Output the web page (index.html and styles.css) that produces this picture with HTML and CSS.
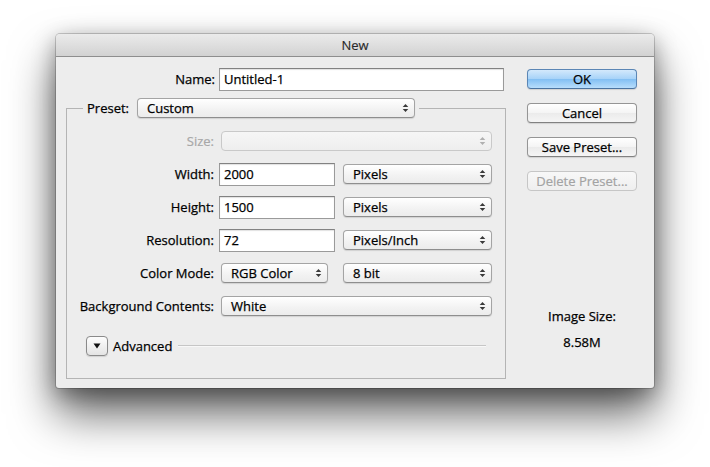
FILE: index.html
```html
<!DOCTYPE html>
<html>
<head>
<meta charset="utf-8">
<link rel="stylesheet" href="styles.css">
</head>
<body>
<div class="stage">
  <div class="dialog">
    <div class="titlebar">New</div>
    <div class="body">
      <div class="main">
        <div class="name-row">
          <span class="lbl name-lbl">Name:</span>
          <div class="textfield name-field">Untitled-1</div>
        </div>
        <fieldset class="preset">
          <legend class="legend">
            <span class="lbl">Preset:</span>
            <div class="popup preset-popup"><span class="pv">Custom</span><svg class="arr" width="7" height="10" viewBox="0 0 7 10"><path d="M0.7 4 L3.5 1 L6.3 4Z M0.7 6 L3.5 9 L6.3 6Z"/></svg></div>
          </legend>
          <div class="row first">
            <span class="lbl col-lbl dis">Size:</span>
            <div class="popup wide disabled"><span class="pv"></span><svg class="arr" width="7" height="10" viewBox="0 0 7 10"><path d="M0.7 4 L3.5 1 L6.3 4Z M0.7 6 L3.5 9 L6.3 6Z"/></svg></div>
          </div>
          <div class="row">
            <span class="lbl col-lbl">Width:</span>
            <div class="textfield num">2000</div>
            <div class="popup unit"><span class="pv">Pixels</span><svg class="arr" width="7" height="10" viewBox="0 0 7 10"><path d="M0.7 4 L3.5 1 L6.3 4Z M0.7 6 L3.5 9 L6.3 6Z"/></svg></div>
          </div>
          <div class="row">
            <span class="lbl col-lbl">Height:</span>
            <div class="textfield num">1500</div>
            <div class="popup unit"><span class="pv">Pixels</span><svg class="arr" width="7" height="10" viewBox="0 0 7 10"><path d="M0.7 4 L3.5 1 L6.3 4Z M0.7 6 L3.5 9 L6.3 6Z"/></svg></div>
          </div>
          <div class="row">
            <span class="lbl col-lbl">Resolution:</span>
            <div class="textfield num">72</div>
            <div class="popup unit"><span class="pv">Pixels/Inch</span><svg class="arr" width="7" height="10" viewBox="0 0 7 10"><path d="M0.7 4 L3.5 1 L6.3 4Z M0.7 6 L3.5 9 L6.3 6Z"/></svg></div>
          </div>
          <div class="row">
            <span class="lbl col-lbl">Color Mode:</span>
            <div class="popup mode"><span class="pv">RGB Color</span><svg class="arr" width="7" height="10" viewBox="0 0 7 10"><path d="M0.7 4 L3.5 1 L6.3 4Z M0.7 6 L3.5 9 L6.3 6Z"/></svg></div>
            <div class="popup unit"><span class="pv">8 bit</span><svg class="arr" width="7" height="10" viewBox="0 0 7 10"><path d="M0.7 4 L3.5 1 L6.3 4Z M0.7 6 L3.5 9 L6.3 6Z"/></svg></div>
          </div>
          <div class="row">
            <span class="lbl col-lbl">Background Contents:</span>
            <div class="popup wide"><span class="pv">White</span><svg class="arr" width="7" height="10" viewBox="0 0 7 10"><path d="M0.7 4 L3.5 1 L6.3 4Z M0.7 6 L3.5 9 L6.3 6Z"/></svg></div>
          </div>
          <div class="advanced">
            <div class="disclosure"><svg width="8" height="6" viewBox="0 0 8 6"><path d="M0.5 0.5 L7.5 0.5 L4 5.5Z"/></svg></div>
            <span class="adv-lbl">Advanced</span>
            <div class="adv-line"></div>
          </div>
        </fieldset>
      </div>
      <div class="side">
        <div class="btn default">OK</div>
        <div class="btn">Cancel</div>
        <div class="btn">Save Preset...</div>
        <div class="btn disabled">Delete Preset...</div>
        <div class="imgsize">
          <div class="is-lbl">Image Size:</div>
          <div class="is-val">8.58M</div>
        </div>
      </div>
    </div>
  </div>
</div>
</body>
</html>
```
FILE: styles.css
```css
html, body {
  margin: 0;
  padding: 0;
  background: #ffffff;
}
body {
  font-family: "Open Sans", "Lato", sans-serif;
  font-size: 13px;
  color: #000;
  -webkit-text-stroke: 0.25px #000;
  min-height: 467px;
}
.stage {
  padding: 34px 0 0 56px;
  min-height: 467px;
  box-sizing: border-box;
}
.dialog {
  width: 598px;
  background: #ededed;
  border-radius: 4px 4px 3px 3px;
  box-shadow: 0 0 0 1px rgba(0,0,0,0.18), 0 6px 22px rgba(0,0,0,0.35), 0 26px 46px rgba(0,0,0,0.6);
  overflow: hidden;
}
.titlebar {
  height: 22px;
  line-height: 22px;
  text-align: center;
  font-size: 13px;
  color: #2a2a2a;
  -webkit-text-stroke: 0.15px #2a2a2a;
  background: linear-gradient(#ebebeb, #d2d2d2);
  border-bottom: 1px solid #8e8e8e;
}
.body {
  display: flex;
  padding: 10px 0 9px 10px;
}
.main {
  width: 439px;
}
.lbl {
  white-space: nowrap;
  line-height: 16px;
}
.name-row {
  display: flex;
  align-items: center;
  height: 24px;
}
.name-lbl {
  width: 149px;
  text-align: right;
  margin-right: 4px;
}
.textfield {
  box-sizing: border-box;
  height: 23px;
  line-height: 21px;
  padding-left: 4px;
  background: #fff;
  border: 1px solid #9a9a9a;
  border-top-color: #828282;
  box-shadow: inset 0 1px 1px rgba(0,0,0,0.12);
}
.name-field {
  width: 285px;
}
.preset {
  margin: 7px 0 0 0;
  padding: 0 0 20px 0;
  border: 1px solid #b4b4b4;
  width: 440px;
  box-sizing: border-box;
  min-width: 0;
}
.legend {
  margin-left: 16px;
  padding: 0 4px;
  display: flex;
  align-items: center;
  height: 20px;
}
.popup {
  box-sizing: border-box;
  height: 20px;
  display: flex;
  align-items: center;
  padding: 0 5px 0 9px;
  border: 1px solid #a4a4a4;
  border-bottom-color: #8e8e8e;
  border-radius: 4px;
  background: linear-gradient(#ffffff, #f2f2f2 60%, #ececec);
  box-shadow: 0 1px 1px rgba(0,0,0,0.12);
}
.pv {
  flex: 1;
  white-space: nowrap;
  line-height: 16px;
}
.arr path {
  fill: #3a3a3a;
}
.preset-popup {
  width: 278px;
  margin-left: 8px;
}
.row {
  display: flex;
  align-items: center;
  height: 24px;
  margin-top: 9px;
}
.row.first {
  margin-top: 11px;
}
.col-lbl {
  width: 147px;
  text-align: right;
  margin-right: 5px;
}
.dis {
  color: #a8a8a8;
  -webkit-text-stroke: 0.2px #a8a8a8;
}
.popup.disabled {
  border-color: #c9c9c9;
  background: linear-gradient(#f6f6f6, #eeeeee);
  box-shadow: none;
}
.popup.disabled .arr path {
  fill: #b0b0b0;
}
.wide {
  width: 271px;
  margin-left: 2px;
}
.num {
  width: 116px;
}
.unit {
  width: 149px;
  margin-left: 8px;
}
.mode {
  width: 107px;
  margin-left: 2px;
  margin-right: 7px;
}
.advanced {
  display: flex;
  align-items: center;
  height: 24px;
  margin-top: 16px;
  padding-left: 19px;
  padding-right: 19px;
}
.disclosure {
  box-sizing: border-box;
  width: 22px;
  height: 20px;
  border: 1px solid #8a8a8a;
  border-radius: 4px;
  background: linear-gradient(#fdfdfd, #e4e4e4);
  display: flex;
  align-items: center;
  justify-content: center;
  box-shadow: 0 1px 1px rgba(0,0,0,0.12);
}
.disclosure path {
  fill: #111;
}
.adv-lbl {
  margin-left: 5px;
  line-height: 16px;
}
.adv-line {
  flex: 1;
  height: 1px;
  background: #c6c6c6;
  border-bottom: 1px solid #f8f8f8;
  margin-left: 6px;
}
.side {
  width: 110px;
  margin-left: 22px;
  padding-top: 2px;
  display: flex;
  flex-direction: column;
  align-items: stretch;
}
.btn {
  box-sizing: border-box;
  height: 20px;
  line-height: 18px;
  text-align: center;
  border: 1px solid #959595;
  border-bottom-color: #818181;
  border-radius: 4px;
  background: linear-gradient(#ffffff, #f4f4f4 50%, #ebebeb 51%, #f5f5f5);
  box-shadow: 0 1px 1px rgba(0,0,0,0.12);
  margin-bottom: 14px;
  white-space: nowrap;
}
.btn.default {
  border-color: #5b86b5;
  border-bottom-color: #4a73a0;
  background: linear-gradient(#d3e9fc, #a6d2f8 50%, #82bff3 51%, #b8defc);
}
.btn.disabled {
  color: #a3a3a3;
  -webkit-text-stroke: 0.2px #a3a3a3;
  border-color: #c6c6c6;
  background: linear-gradient(#f8f8f8, #efefef);
  box-shadow: none;
}
.imgsize {
  margin-top: 103px;
  text-align: center;
}
.is-lbl {
  line-height: 16px;
}
.is-val {
  line-height: 16px;
  margin-top: 10px;
}
```
